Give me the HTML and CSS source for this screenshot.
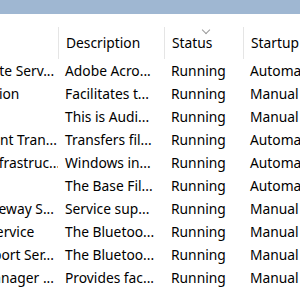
FILE: index.html
```html
<!DOCTYPE html>
<html lang="en">
<head>
    <meta charset="UTF-8">
    <title>Services</title>
    <link rel="stylesheet" href="styles.css">
</head>
<body>
    <div class="titlebar"></div>
    <div class="list">
        <div class="header">
            <div class="col name"></div>
            <div class="col sep">Description</div>
            <div class="col sep sorted">Status<span class="chevron"></span></div>
            <div class="col sep">Startup Type</div>
        </div>
        <div class="row">
            <div class="col name trunc"><span>Adobe Acrobat Update Serv...</span></div>
            <div class="col">Adobe Acro...</div>
            <div class="col">Running</div>
            <div class="col">Automatic</div>
        </div>
        <div class="row">
            <div class="col name"><span>Application Information</span></div>
            <div class="col">Facilitates t...</div>
            <div class="col">Running</div>
            <div class="col">Manual</div>
        </div>
        <div class="row">
            <div class="col name"><span>AppX Deployment</span></div>
            <div class="col">This is Audi...</div>
            <div class="col">Running</div>
            <div class="col">Manual</div>
        </div>
        <div class="row">
            <div class="col name trunc"><span>Background Intelligent Tran...</span></div>
            <div class="col">Transfers fil...</div>
            <div class="col">Running</div>
            <div class="col">Automatic</div>
        </div>
        <div class="row">
            <div class="col name trunc"><span>Background Tasks Infrastruc...</span></div>
            <div class="col">Windows in...</div>
            <div class="col">Running</div>
            <div class="col">Automatic</div>
        </div>
        <div class="row">
            <div class="col name"><span>Base Filtering</span></div>
            <div class="col">The Base Fil...</div>
            <div class="col">Running</div>
            <div class="col">Automatic</div>
        </div>
        <div class="row">
            <div class="col name trunc"><span>Bluetooth Audio Gateway S...</span></div>
            <div class="col">Service sup...</div>
            <div class="col">Running</div>
            <div class="col">Manual</div>
        </div>
        <div class="row">
            <div class="col name"><span>Bluetooth Support Service</span></div>
            <div class="col">The Bluetoo...</div>
            <div class="col">Running</div>
            <div class="col">Manual</div>
        </div>
        <div class="row">
            <div class="col name trunc"><span>Bluetooth User Support Ser...</span></div>
            <div class="col">The Bluetoo...</div>
            <div class="col">Running</div>
            <div class="col">Manual</div>
        </div>
        <div class="row">
            <div class="col name trunc"><span>Capability Access Manager ...</span></div>
            <div class="col">Provides fac...</div>
            <div class="col">Running</div>
            <div class="col">Manual</div>
        </div>
    </div>
</body>
</html>
```

FILE: styles.css
```css
body {
    margin: 0;
    background-color: #fff;
    font-family: "Noto Sans", "Open Sans", sans-serif;
    font-size: 13.8px;
    color: #000;
    overflow: hidden;
}

.titlebar {
    height: 14px;
    background-color: #9fb7d2;
}

.header,
.row {
    display: grid;
    grid-template-columns: 58px 106px 79px 1fr;
    white-space: nowrap;
}

.header {
    height: 45px;
    align-items: end;
}

.header .col {
    height: 32px;
    line-height: 31px;
}

.row {
    height: 23px;
    line-height: 23px;
}

.col {
    padding-left: 7px;
    overflow: hidden;
}

.sep {
    border-left: 1px solid #e5e5e5;
}

/* the list is scrolled right: only the end of each name shows */
.name {
    display: flex;
    justify-content: flex-end;
    padding: 0 4px 0 0;
}

.name span {
    flex: none;
    width: 189px;
}

.name.trunc span {
    text-align: right;
}

.sorted {
    position: relative;
}

.chevron {
    position: absolute;
    left: 38px;
    top: 0;
    width: 5px;
    height: 5px;
    border-right: 1px solid #9a9a9a;
    border-bottom: 1px solid #9a9a9a;
    transform: rotate(45deg);
}
```
